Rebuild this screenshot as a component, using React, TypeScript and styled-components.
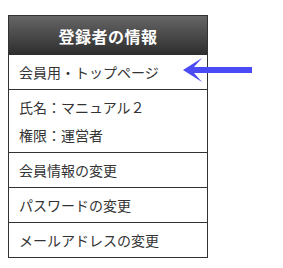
import React from "react";
import styled, { createGlobalStyle } from "styled-components";

const GlobalStyle = createGlobalStyle`
  body {
    margin: 0;
    background: #fff;
    font-family: "Noto Sans CJK JP", "Noto Sans", sans-serif;
  }
`;

const Page = styled.div`
  position: relative;
  padding: 15px 0 0 8px;
`;

const Panel = styled.div`
  box-sizing: border-box;
  width: 200px;
  border: 1px solid #333;
`;

const Header = styled.div`
  height: 39px;
  display: flex;
  align-items: center;
  justify-content: center;
  background: linear-gradient(to bottom, #666 0%, #2d2d2d 100%);
  color: #fff;
  font-size: 16px;
  font-weight: 700;
  letter-spacing: 0.5px;
`;

const Row = styled.div<{ $first?: boolean }>`
  padding: 0 10px;
  border-top: ${(p) => (p.$first ? "none" : "1px solid #333")};
  color: #333;
  font-size: 14px;
  line-height: 34px;
`;

const InfoBlock = styled.div`
  padding: 3px 10px;
  border-top: 1px solid #333;
  color: #333;
  font-size: 14px;
  line-height: 28px;
`;

const Arrow = styled.svg`
  position: absolute;
  left: 183px;
  top: 57px;
`;

export default function App() {
  return (
    <>
      <GlobalStyle />
      <Page>
        <Panel>
          <Header>登録者の情報</Header>
          <Row $first>会員用・トップページ</Row>
          <InfoBlock>
            <div>氏名：マニュアル２</div>
            <div>権限：運営者</div>
          </InfoBlock>
          <Row>会員情報の変更</Row>
          <Row>パスワードの変更</Row>
          <Row>メールアドレスの変更</Row>
        </Panel>
        <Arrow width="69" height="27" viewBox="0 0 69 27">
          <path d="M0 13 L19 1 L11 10 L69 10 L69 16 L11 16 L19 25 Z" fill="#4b4bf5" />
        </Arrow>
      </Page>
    </>
  );
}
